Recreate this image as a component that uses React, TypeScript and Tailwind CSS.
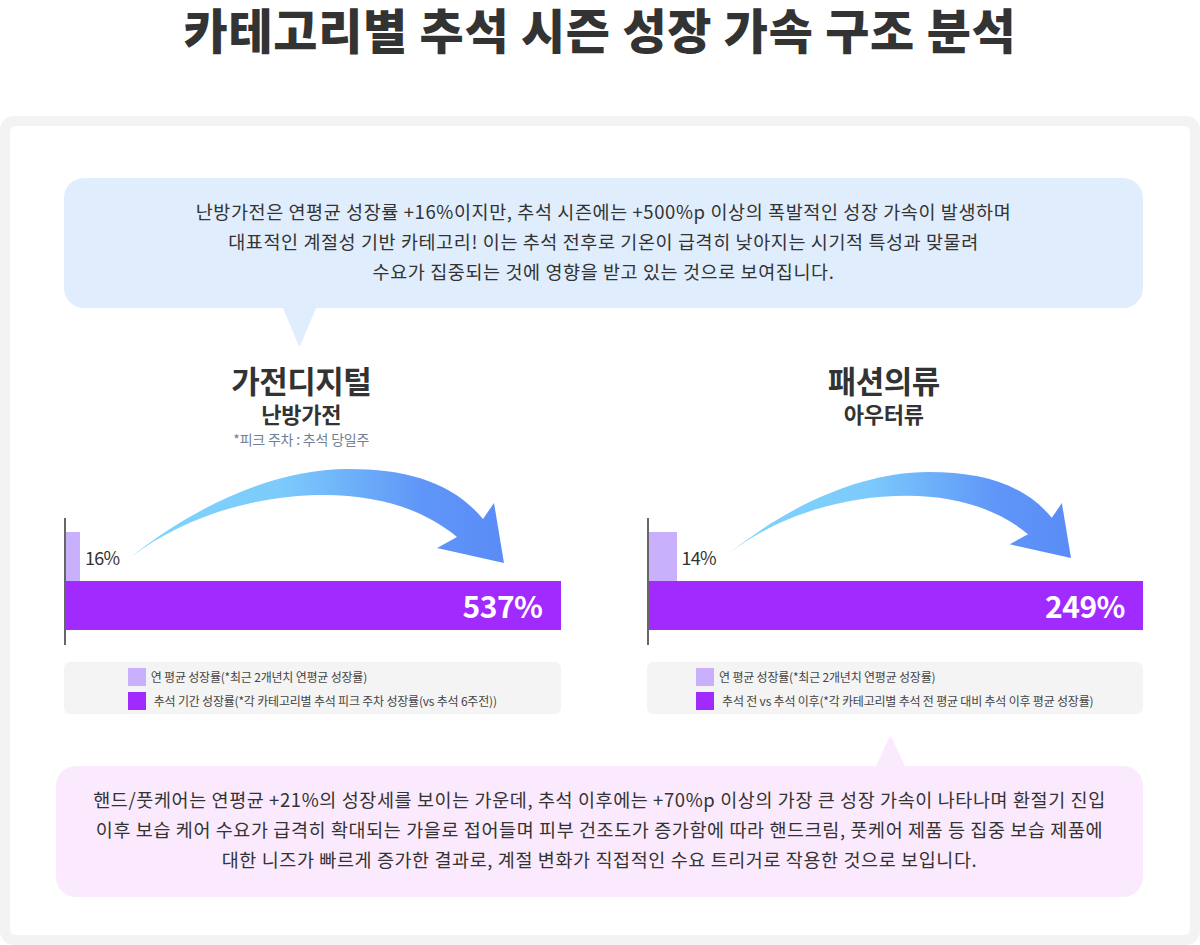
const charts = [
  {
    id: "arrowA",
    title: "가전디지털",
    sub: "난방가전",
    note: "*피크 주차 : 추석 당일주",
    base: "16%",
    baseW: "w-[14px]",
    value: "537%",
    arrow: "left-[65px] top-[-49px] w-[373px] h-[94px]",
    legend1: "연 평균 성장률(*최근 2개년치 연평균 성장률)",
    legend2: "추석 기간 성장률(*각 카테고리별 추석 피크 주차 성장률(vs 추석 6주전))",
  },
  {
    id: "arrowB",
    title: "패션의류",
    sub: "아우터류",
    note: "",
    base: "14%",
    baseW: "w-[28px]",
    value: "249%",
    arrow: "left-[81px] top-[-46px] w-[341px] h-[86px]",
    legend1: "연 평균 성장률(*최근 2개년치 연평균 성장률)",
    legend2: "추석 전 vs 추석 이후(*각 카테고리별 추석 전 평균 대비 추석 이후 평균 성장률)",
  },
];

function Arrow({ id, className }: { id: string; className: string }) {
  return (
    <svg viewBox="0 0 373 94" preserveAspectRatio="none" className={className}>
      <defs>
        <linearGradient id={id} x1="0" y1="0" x2="1" y2="0">
          <stop offset="0" stopColor="#80d4fc" />
          <stop offset="0.4" stopColor="#7ccbfb" />
          <stop offset="0.78" stopColor="#5f96f8" />
          <stop offset="1" stopColor="#5a8cf7" />
        </linearGradient>
      </defs>
      <path
        d="M0 88 C60 40 140 0 217 0 C278 0 322 14 352 50 L363 34 L373 94 L306 79 L326 68 C295 42 250 26 193 26 C120 26 50 50 0 88 Z"
        fill={`url(#${id})`}
      />
    </svg>
  );
}

export default function App() {
  return (
    <div className="w-[1200px] bg-white font-['Noto_Sans_CJK_KR','Noto_Sans',sans-serif] text-[#333]">
      <div className="h-[116px] pt-[2px]">
        <h1 className="text-center text-[48px] font-black leading-[52px] tracking-[0.7px]">
          카테고리별 추석 시즌 성장 가속 구조 분석
        </h1>
      </div>

      <div className="rounded-[14px] bg-[#f3f3f3] p-[10px]">
        <div className="rounded-[6px] bg-white pb-[38px] pl-[54px] pr-[47px] pt-[52px]">
          {/* top bubble */}
          <div className="relative h-[130px] rounded-[20px] bg-[#e0edfc] pt-[18px] text-center text-[18.5px] leading-[30px] tracking-[0.6px]">
            난방가전은 연평균 성장률 +16%이지만, 추석 시즌에는 +500%p 이상의 폭발적인 성장 가속이 발생하며
            <br />
            대표적인 계절성 기반 카테고리! 이는 추석 전후로 기온이 급격히 낮아지는 시기적 특성과 맞물려
            <br />
            수요가 집중되는 것에 영향을 받고 있는 것으로 보여집니다.
            <svg viewBox="0 0 33 38" className="absolute left-[219px] top-full h-[38px] w-[33px]">
              <path d="M0 0 L33 0 L17.5 37 Q16.5 38.5 15.5 37 Z" fill="#e0edfc" />
            </svg>
          </div>

          <div className="mt-[54px] grid grid-cols-2 gap-x-[86px]">
            {charts.map((c) => (
              <div key={c.id}>
                <div className="flex h-[156px] flex-col items-center pr-[22px]">
                  <div className="text-[31px] font-bold leading-[36px] tracking-[-0.5px]">{c.title}</div>
                  <div className="mt-[2px] text-[22px] font-bold leading-[26px] tracking-[-0.3px]">{c.sub}</div>
                  {c.note && (
                    <div className="mt-[4px] text-[14px] leading-[18px] tracking-[-0.2px] text-[#6f7f95]">{c.note}</div>
                  )}
                </div>

                <div className="relative h-[127px] border-l-2 border-[#666] pt-[14px]">
                  <Arrow id={c.id} className={`absolute ${c.arrow}`} />
                  <div className="flex h-[49px] items-center">
                    <div className={`h-full ${c.baseW} bg-[#c8b0fd]`} />
                    <span className="ml-[5px] text-[18px] leading-none tracking-[-0.8px]">{c.base}</span>
                  </div>
                  <div className="flex h-[49px] items-center justify-end bg-[#a12bff] pr-[18px] text-[30px] font-semibold tracking-[-0.5px] text-white">
                    {c.value}
                  </div>
                </div>

                <div className="mt-[17px] flex h-[52px] justify-center rounded-[6px] bg-[#f4f4f4] pt-[6px]">
                  <div className="flex flex-col gap-[6px] text-[12px] leading-[18px] tracking-[-0.2px] text-[#444]">
                    <div className="flex items-center gap-[5px]">
                      <span className="h-[18px] w-[18px] bg-[#c8b0fd]" />
                      <span>{c.legend1}</span>
                    </div>
                    <div className="flex items-center gap-[8px]">
                      <span className="h-[18px] w-[18px] bg-[#a12bff]" />
                      <span>{c.legend2}</span>
                    </div>
                  </div>
                </div>
              </div>
            ))}
          </div>

          {/* bottom bubble */}
          <div className="relative -ml-[8px] mt-[52px] h-[131px] rounded-[20px] bg-[#fbeafd] pt-[18px] text-center text-[18.5px] leading-[30px] tracking-[0.6px]">
            <svg viewBox="0 0 29 30" className="absolute bottom-full left-[820px] h-[30px] w-[29px]">
              <path d="M0 30 L29 30 L15.5 1 Q14.5 -0.5 13.5 1 Z" fill="#fbeafd" />
            </svg>
            핸드/풋케어는 연평균 +21%의 성장세를 보이는 가운데, 추석 이후에는 +70%p 이상의 가장 큰 성장 가속이 나타나며 환절기 진입
            <br />
            이후 보습 케어 수요가 급격히 확대되는 가을로 접어들며 피부 건조도가 증가함에 따라 핸드크림, 풋케어 제품 등 집중 보습 제품에
            <br />
            대한 니즈가 빠르게 증가한 결과로, 계절 변화가 직접적인 수요 트리거로 작용한 것으로 보입니다.
          </div>
        </div>
      </div>
    </div>
  );
}
